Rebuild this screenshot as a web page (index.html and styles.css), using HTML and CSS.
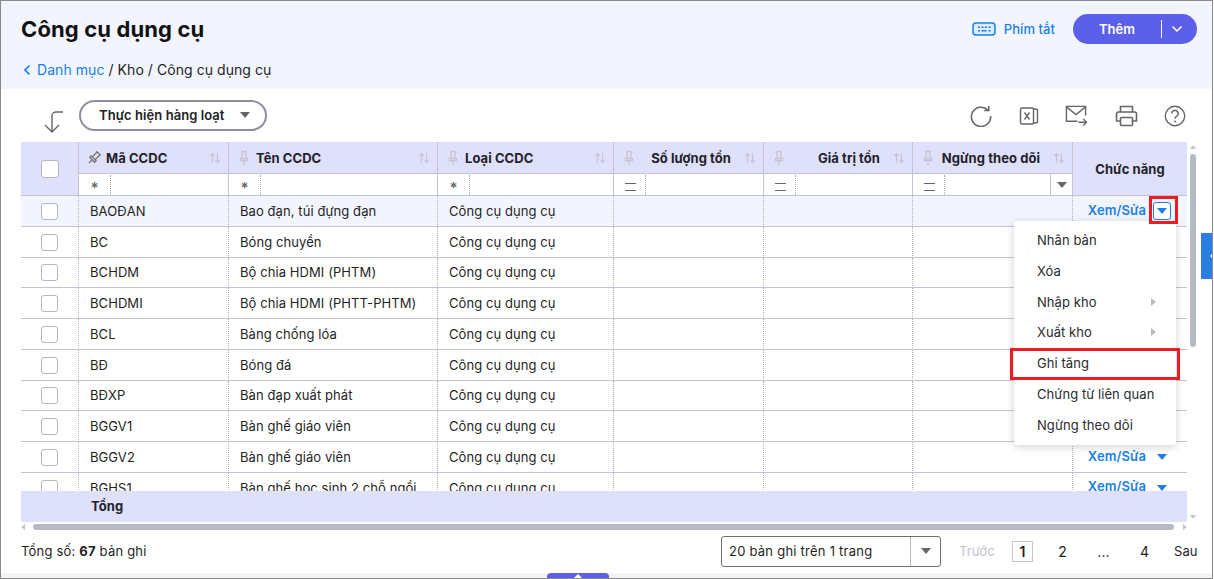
FILE: index.html
```html
<!DOCTYPE html>
<html lang="vi">
<head>
    <meta charset="UTF-8">
    <title>Công cụ dụng cụ</title>
    <link rel="stylesheet" href="styles.css">
</head>
<body>
<div class="frame">
    <svg class="defs" width="0" height="0">
        <symbol id="pin" viewBox="0 0 12 16"><path d="M3 1.500h6M4 1.500v7M8 1.500v7M2.500 8.500h7v2h-7zM6 10.500V15" fill="none" stroke="currentColor" stroke-width="1.300"/></symbol>
        <symbol id="sort" viewBox="0 0 12 12"><path d="M3.500 11V1.500M1.200 3.800l2.300-2.300 2.300 2.300M8.500 1v9.500M6.200 8.200l2.300 2.300 2.300-2.300" fill="none" stroke="currentColor" stroke-width="1.200"/></symbol>
        <symbol id="check" viewBox="0 0 10 6"><path d="M0 0h10L5 6z" fill="currentColor"/></symbol>
    </svg>

    <div class="page-head">
        <div class="head-top">
            <h1>Công cụ dụng cụ</h1>
            <div class="head-actions">
                <a class="shortcut">
                    <svg width="24" height="14" viewBox="0 0 24 14"><rect x="1" y="1" width="22" height="12" rx="3" fill="#dcecfd" stroke="#1a7fe8" stroke-width="1.500"/><path d="M6 5.200h2M9.500 5.200h2M13 5.200h2M16.500 5.200h2M6 8.800h2M9.500 8.800h5M16.500 8.800h2" stroke="#1a7fe8" stroke-width="1.400"/></svg>
                    Phím tắt
                </a>
                <div class="add-btn">
                    <span class="add-label">Thêm</span>
                    <span class="add-more">
                        <svg width="12" height="8" viewBox="0 0 12 8"><path d="M1.500 1.500 6 6l4.500-4.500" fill="none" stroke="#fff" stroke-width="1.500"/></svg>
                    </span>
                </div>
            </div>
        </div>
        <div class="crumbs">
            <svg width="8" height="12" viewBox="0 0 8 12"><path d="M6.500 1.500 2 6l4.500 4.500" fill="none" stroke="#1a7fe8" stroke-width="1.700"/></svg>
            <a>Danh mục</a>
            <span>/ Kho / Công cụ dụng cụ</span>
        </div>
    </div>

    <div class="toolbar">
        <svg class="back-arrow" width="22" height="24" viewBox="0 0 22 24"><path d="M20 2h-7a4 4 0 0 0-4 4v16M2 15l7 7 7-7" fill="none" stroke="#666" stroke-width="1.400"/></svg>
        <div class="bulk-btn">Thực hiện hàng loạt <svg width="10" height="6"><use href="#check"/></svg></div>
        <div class="tools">
            <svg width="22" height="22" viewBox="0 0 24 24"><path d="M19.500 5.500A10.500 10.500 0 1 0 22.500 12M20.500 1v5h-5" fill="none" stroke="#666" stroke-width="1.700"/></svg>
            <svg width="20" height="20" viewBox="0 0 20 20"><path d="M14 2.500l4.500 1v13l-4.500 1" fill="none" stroke="#666" stroke-width="1.400"/><rect x="1.500" y="2" width="13" height="16" rx="1.500" fill="none" stroke="#666" stroke-width="1.400"/><path d="M5.500 6.500l5 7M10.500 6.500l-5 7" stroke="#666" stroke-width="1.400"/></svg>
            <svg width="23" height="23" viewBox="0 0 24 24"><path d="M13 18H1.500V2.500h20V12M1.500 3l10 8 10-8" fill="none" stroke="#666" stroke-width="1.500"/><path d="M14 19h8.500M19 15.500l3.500 3.500-3.500 3.500" fill="none" stroke="#666" stroke-width="1.400"/></svg>
            <svg width="23" height="22" viewBox="0 0 23 22"><path d="M5.500 7V1.500h12V7M5.500 16H1.500V9a2 2 0 0 1 2-2h16a2 2 0 0 1 2 2v7h-4" fill="none" stroke="#666" stroke-width="1.600"/><rect x="5.500" y="12.500" width="12" height="8" rx="1" fill="none" stroke="#666" stroke-width="1.600"/></svg>
            <svg width="22" height="22" viewBox="0 0 22 22"><circle cx="11" cy="11" r="9.700" fill="none" stroke="#666" stroke-width="1.400"/><path d="M7.800 8.500a3.200 3.200 0 1 1 4.800 2.800c-1 .6-1.600 1.200-1.600 2.400" fill="none" stroke="#666" stroke-width="1.500"/><circle cx="11" cy="16.500" r="1" fill="#666"/></svg>
        </div>
    </div>

    <div class="grid-area">
        <div class="grid-main">
            <div class="grid-clip">
                <table class="grid">
                    <colgroup>
                        <col class="c-check"><col class="c-code"><col class="c-name"><col class="c-type">
                        <col class="c-qty"><col class="c-value"><col class="c-stop"><col class="c-func">
                    </colgroup>
                    <thead>
                        <tr class="head-row">
                            <th rowspan="2" class="check-head"><span class="box box-big"></span></th>
                            <th><div class="th-in"><svg class="pin pin-on" width="12" height="16"><use href="#pin"/></svg><span>Mã CCDC</span><svg class="sort" width="12" height="12"><use href="#sort"/></svg></div></th>
                            <th><div class="th-in"><svg class="pin" width="12" height="16"><use href="#pin"/></svg><span>Tên CCDC</span><svg class="sort" width="12" height="12"><use href="#sort"/></svg></div></th>
                            <th><div class="th-in"><svg class="pin" width="12" height="16"><use href="#pin"/></svg><span>Loại CCDC</span><svg class="sort" width="12" height="12"><use href="#sort"/></svg></div></th>
                            <th><div class="th-in th-right"><svg class="pin" width="12" height="16"><use href="#pin"/></svg><span>Số lượng tồn</span><svg class="sort" width="12" height="12"><use href="#sort"/></svg></div></th>
                            <th><div class="th-in th-right"><svg class="pin" width="12" height="16"><use href="#pin"/></svg><span>Giá trị tồn</span><svg class="sort" width="12" height="12"><use href="#sort"/></svg></div></th>
                            <th><div class="th-in th-right"><svg class="pin" width="12" height="16"><use href="#pin"/></svg><span>Ngừng theo dõi</span><svg class="sort" width="12" height="12"><use href="#sort"/></svg></div></th>
                            <th rowspan="2" class="func-head">Chức năng</th>
                        </tr>
                        <tr class="filter-row">
                            <td><div class="filter"><span class="op op-star">*</span></div></td>
                            <td><div class="filter"><span class="op op-star">*</span></div></td>
                            <td><div class="filter"><span class="op op-star">*</span></div></td>
                            <td><div class="filter"><span class="op op-eq"></span></div></td>
                            <td><div class="filter"><span class="op op-eq"></span></div></td>
                            <td><div class="filter"><span class="op op-eq"></span><span class="filter-arrow"><svg width="10" height="6"><use href="#check"/></svg></span></div></td>
                        </tr>
                    </thead>
                    <tbody>
                        <tr class="row-active"><td><span class="box"></span></td><td>BAOĐAN</td><td>Bao đạn, túi đựng đạn</td><td>Công cụ dụng cụ</td><td></td><td></td><td></td><td class="func"><a>Xem/Sửa</a><span class="row-menu row-menu-on"><svg width="10" height="6"><use href="#check"/></svg></span></td></tr>
                        <tr><td><span class="box"></span></td><td>BC</td><td>Bóng chuyền</td><td>Công cụ dụng cụ</td><td></td><td></td><td></td><td class="func"><a>Xem/Sửa</a><span class="row-menu"><svg width="10" height="6"><use href="#check"/></svg></span></td></tr>
                        <tr><td><span class="box"></span></td><td>BCHDM</td><td>Bộ chia HDMI (PHTM)</td><td>Công cụ dụng cụ</td><td></td><td></td><td></td><td class="func"><a>Xem/Sửa</a><span class="row-menu"><svg width="10" height="6"><use href="#check"/></svg></span></td></tr>
                        <tr><td><span class="box"></span></td><td>BCHDMI</td><td>Bộ chia HDMI (PHTT-PHTM)</td><td>Công cụ dụng cụ</td><td></td><td></td><td></td><td class="func"><a>Xem/Sửa</a><span class="row-menu"><svg width="10" height="6"><use href="#check"/></svg></span></td></tr>
                        <tr><td><span class="box"></span></td><td>BCL</td><td>Bàng chống lóa</td><td>Công cụ dụng cụ</td><td></td><td></td><td></td><td class="func"><a>Xem/Sửa</a><span class="row-menu"><svg width="10" height="6"><use href="#check"/></svg></span></td></tr>
                        <tr><td><span class="box"></span></td><td>BĐ</td><td>Bóng đá</td><td>Công cụ dụng cụ</td><td></td><td></td><td></td><td class="func"><a>Xem/Sửa</a><span class="row-menu"><svg width="10" height="6"><use href="#check"/></svg></span></td></tr>
                        <tr><td><span class="box"></span></td><td>BĐXP</td><td>Bàn đạp xuất phát</td><td>Công cụ dụng cụ</td><td></td><td></td><td></td><td class="func"><a>Xem/Sửa</a><span class="row-menu"><svg width="10" height="6"><use href="#check"/></svg></span></td></tr>
                        <tr><td><span class="box"></span></td><td>BGGV1</td><td>Bàn ghế giáo viên</td><td>Công cụ dụng cụ</td><td></td><td></td><td></td><td class="func"><a>Xem/Sửa</a><span class="row-menu"><svg width="10" height="6"><use href="#check"/></svg></span></td></tr>
                        <tr><td><span class="box"></span></td><td>BGGV2</td><td>Bàn ghế giáo viên</td><td>Công cụ dụng cụ</td><td></td><td></td><td></td><td class="func"><a>Xem/Sửa</a><span class="row-menu"><svg width="10" height="6"><use href="#check"/></svg></span></td></tr>
                        <tr><td><span class="box"></span></td><td>BGHS1</td><td>Bàn ghế học sinh 2 chỗ ngồi</td><td>Công cụ dụng cụ</td><td></td><td></td><td></td><td class="func"><a>Xem/Sửa</a><span class="row-menu"><svg width="10" height="6"><use href="#check"/></svg></span></td></tr>
                    </tbody>
                </table>
            </div>
            <div class="total-row">Tổng</div>
        </div>
        <div class="vscroll">
            <span class="arrow-up"></span>
            <span class="vthumb"></span>
            <span class="arrow-down"></span>
        </div>
    </div>

    <div class="hscroll">
        <span class="arrow-left"></span>
        <span class="hthumb"></span>
        <span class="arrow-right"></span>
    </div>

    <div class="pager">
        <div class="count">Tổng số: <b>67</b> bản ghi</div>
        <div class="page-size">
            <span class="size-text">20 bản ghi trên 1 trang</span>
            <span class="size-arrow"><svg width="10" height="6"><use href="#check"/></svg></span>
        </div>
        <div class="pages">
            <span class="prev">Trước</span>
            <span class="page page-on">1</span>
            <span class="page">2</span>
            <span class="page">...</span>
            <span class="page">4</span>
            <span class="next">Sau</span>
        </div>
    </div>

    <div class="bottom-strip"><span class="bottom-tab"></span></div>

    <div class="row-actions">
        <div class="item">Nhân bản</div>
        <div class="item">Xóa</div>
        <div class="item has-sub">Nhập kho</div>
        <div class="item has-sub">Xuất kho</div>
        <div class="item item-marked">Ghi tăng</div>
        <div class="item">Chứng từ liên quan</div>
        <div class="item">Ngừng theo dõi</div>
    </div>

    <div class="side-tab"></div>
</div>
</body>
</html>
```

FILE: styles.css
```css
* {
    box-sizing: border-box;
}
html, body {
    margin: 0;
    background: #fff;
    overflow: hidden;
}
body {
    width: 1214px;
    height: 579px;
    font-family: Inter, "Noto Sans", sans-serif;
    font-size: 13px;
    letter-spacing: 0.06px;
    color: #1f1f24;
}
.defs {
    position: absolute;
}
.frame {
    position: relative;
    width: 1213px;
    height: 579px;
    border: 1px solid #8a8a8a;
    background: #fff;
    overflow: hidden;
}

/* page header */
.page-head {
    height: 88px;
    background: #f2f5fe;
    padding: 13px 15px 0 20px;
}
.head-top {
    display: flex;
    align-items: center;
    justify-content: space-between;
    height: 30px;
}
h1 {
    margin: 0;
    font-size: 22px;
    font-weight: 700;
    letter-spacing: 0.13px;
    color: #111;
}
.head-actions {
    display: flex;
    align-items: center;
}
.shortcut {
    display: flex;
    align-items: center;
    gap: 8px;
    color: #1a7fe8;
    font-weight: 500;
    margin-right: 18px;
}
.add-btn {
    display: flex;
    align-items: center;
    width: 124px;
    height: 30px;
    border-radius: 15px;
    background: #5c5fe8;
    color: #fff;
    font-weight: 600;
}
.add-label {
    width: 88px;
    text-align: center;
}
.add-more {
    display: flex;
    align-items: center;
    height: 18px;
    padding-left: 9px;
    border-left: 1px solid #fff;
}
.crumbs {
    display: flex;
    align-items: center;
    margin: 17px 0 0 2px;
    font-size: 14px;
}
.crumbs a {
    color: #1a7fe8;
    margin-left: 6px;
    margin-right: 4px;
}

/* toolbar */
.toolbar {
    display: flex;
    align-items: center;
    height: 53px;
    padding: 0 26px 0 42px;
}
.back-arrow {
    margin-top: 12px;
}
.bulk-btn {
    display: flex;
    align-items: center;
    justify-content: space-between;
    width: 188px;
    height: 31px;
    margin-left: 14px;
    padding: 0 15px 1px 18px;
    border: 2px solid #8c909e;
    border-radius: 16px;
    font-weight: 600;
    color: #222;
}
.bulk-btn svg {
    color: #666;
}
.tools {
    display: flex;
    align-items: center;
    gap: 26.5px;
    margin-left: auto;
}

/* grid */
.grid-area {
    display: flex;
    margin-left: 20px;
}
.grid-main {
    width: 1166px;
}
.grid-clip {
    height: 349px;
    overflow: hidden;
}
.grid {
    width: 1166px;
    table-layout: fixed;
    border-collapse: separate;
    border-spacing: 0;
}
.c-check { width: 58px; }
.c-code { width: 150px; }
.c-name { width: 209px; }
.c-type { width: 176px; }
.c-qty { width: 150px; }
.c-value { width: 149px; }
.c-stop { width: 160px; }
.c-func { width: 114px; }

.head-row th {
    height: 32px;
    background: #dfe0fb;
    border-right: 1px solid #c2c4d2;
    border-bottom: 1px solid #c2c4d2;
    padding: 0;
    font-weight: 700;
    color: #22222a;
}
.head-row th:last-child {
    border-right: none;
}
.check-head {
    text-align: center;
}
.func-head {
    text-align: center;
}
.th-in {
    display: flex;
    align-items: center;
    padding: 0 7px 0 9px;
}
.th-in span {
    margin-left: 6px;
}
.th-right span {
    margin-left: auto;
}
.pin {
    color: #c3c5d2;
    flex: none;
}
.pin-on {
    color: #777;
    transform: rotate(45deg);
}
.sort {
    color: #c3c5d2;
    margin-left: auto;
    flex: none;
}
.th-right .sort {
    margin-left: 13px;
}
.filter-row td {
    height: 22px;
    padding: 0;
    background: #fff;
    border-right: 1px solid #c2c4d2;
    border-bottom: 1px solid #c2c4d2;
}
.filter {
    display: flex;
    align-items: center;
    height: 21px;
}
.op {
    display: block;
    width: 32px;
    height: 20px;
    border-right: 1px dotted #a8aab6;
    text-align: center;
    color: #666;
    font-weight: 600;
}
.op-star {
    font-size: 15px;
    line-height: 26px;
}
.op-eq {
    position: relative;
}
.op-eq::before {
    content: "";
    position: absolute;
    left: 11px;
    top: 8px;
    width: 11px;
    height: 6px;
    border-top: 1px solid #666;
    border-bottom: 1px solid #666;
}
.filter-arrow {
    display: flex;
    align-items: center;
    justify-content: center;
    width: 22px;
    height: 21px;
    margin-left: auto;
    border-left: 1px solid #c2c4d2;
    color: #666;
}
tbody td {
    height: 30.75px;
    padding: 0 11px;
    border-right: 1px dotted #b0b2be;
    border-bottom: 1px solid #c2c4d2;
    letter-spacing: 0.08px;
    white-space: nowrap;
    overflow: hidden;
}
tbody td:first-child {
    padding: 0;
    text-align: center;
}
tbody td:last-child {
    border-right: none;
}
.row-active td {
    background: #f2f5fe;
}
.box {
    display: inline-block;
    width: 17px;
    height: 17px;
    border: 1px solid #b4b6c4;
    border-radius: 3px;
    background: #fff;
    vertical-align: middle;
}
.box-big {
    width: 18px;
    height: 18px;
}
.func {
    text-align: right;
}
tbody td.func {
    padding: 0 16px 0 0;
    overflow: visible;
}
.func a {
    color: #1a7fe8;
    font-weight: 600;
}
.row-menu {
    display: inline-flex;
    align-items: center;
    justify-content: center;
    width: 18px;
    height: 18px;
    margin-left: 7px;
    color: #1a7fe8;
    vertical-align: middle;
}
.row-menu-on {
    position: relative;
    z-index: 2;
    border: 1px solid #1a7fe8;
    border-radius: 3px;
    background: #fff;
}
.row-menu-on::after {
    content: "";
    position: absolute;
    inset: -7px -8px -5px -5px;
    border: 3px solid #ed1c24;
}
.total-row {
    height: 31px;
    line-height: 30px;
    padding-left: 70px;
    background: #dfe0fb;
    font-weight: 700;
    color: #22222a;
}

/* scrollbars */
.vscroll {
    display: flex;
    flex-direction: column;
    align-items: center;
    width: 9px;
    height: 380px;
    margin-left: 1px;
    padding-top: 3px;
}
.arrow-up {
    border: 3px solid transparent;
    border-top: none;
    border-bottom: 4px solid #c4c6ce;
}
.vthumb {
    width: 6px;
    height: 193px;
    margin-top: 5px;
    border-radius: 3px;
    background: #b6bac3;
}
.arrow-down {
    margin-top: auto;
    margin-bottom: 3px;
    border: 3px solid transparent;
    border-bottom: none;
    border-top: 4px solid #c4c6ce;
}
.hscroll {
    display: flex;
    align-items: center;
    width: 1166px;
    height: 6px;
    margin: 2px 0 0 20px;
}
.arrow-left {
    border: 3px solid transparent;
    border-left: none;
    border-right: 4px solid #c4c6ce;
}
.hthumb {
    width: 1141px;
    height: 6px;
    margin-left: 8px;
    border-radius: 3px;
    background: #b6bac3;
}
.arrow-right {
    margin-left: auto;
    border: 3px solid transparent;
    border-right: none;
    border-left: 4px solid #c4c6ce;
}

/* pager */
.pager {
    display: flex;
    align-items: center;
    height: 42px;
    padding: 0 0 0 20px;
}
.count {
    width: 700px;
    letter-spacing: 0.2px;
}
.page-size {
    display: flex;
    align-items: center;
    width: 220px;
    height: 31px;
    border: 1px solid #6e6e76;
    border-radius: 3px;
}
.size-text {
    width: 189px;
    padding-left: 7px;
    line-height: 29px;
    letter-spacing: 0.24px;
    border-right: 1px solid #b8bac4;
}
.size-arrow {
    display: flex;
    justify-content: center;
    flex: 1;
    color: #666;
}
.pages {
    display: flex;
    align-items: center;
    margin-left: 18px;
}
.prev {
    width: 53px;
    color: #c0c2cc;
}
.page {
    width: 41px;
    font-size: 14px;
    text-align: center;
}
.page-on {
    width: 21px;
    height: 21px;
    line-height: 19px;
    margin-right: 9px;
    border: 1px solid #c2c4d2;
    font-weight: 600;
}
.next {
    margin-left: 9px;
}
.bottom-strip {
    position: absolute;
    left: 0;
    right: 0;
    bottom: 0;
    height: 5px;
    background: #f2f4f8;
}
.bottom-tab {
    position: absolute;
    left: 546px;
    top: 0;
    width: 62px;
    height: 5px;
    border-radius: 4px 4px 0 0;
    background: #5c5fe8;
}
.bottom-tab::after {
    content: "";
    position: absolute;
    left: 27px;
    top: 1px;
    border: 4px solid transparent;
    border-top: none;
    border-bottom: 4px solid #fff;
}

/* popups */
.row-actions {
    position: absolute;
    z-index: 1;
    left: 1013px;
    top: 220px;
    width: 162px;
    padding: 4px 0 5px;
    border-radius: 3px;
    background: #fff;
    box-shadow: 0 2px 8px rgba(0, 0, 0, 0.18);
}
.item {
    position: relative;
    height: 30.75px;
    line-height: 30px;
    padding-left: 23px;
    color: #2a2a30;
}
.has-sub::after {
    content: "";
    position: absolute;
    right: 20px;
    top: 11px;
    border: 4px solid transparent;
    border-right: none;
    border-left: 5px solid #b8bac4;
}
.item-marked::after {
    content: "";
    position: absolute;
    inset: 0 -4px -1px -4px;
    border: 3px solid #ed1c24;
}
.side-tab {
    position: absolute;
    left: 1200px;
    top: 232px;
    width: 13px;
    height: 46px;
    background: #2a7de1;
}
.side-tab::after {
    content: "";
    position: absolute;
    right: 0;
    top: 19px;
    border: 4px solid transparent;
    border-left: none;
    border-right: 4px solid #fff;
}
```
